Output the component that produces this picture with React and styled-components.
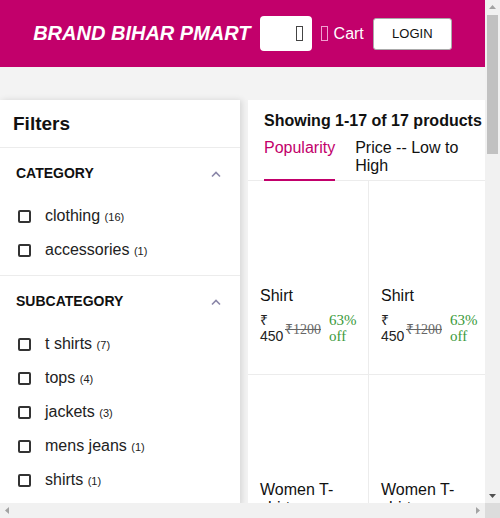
import React from "react";
import styled, { createGlobalStyle } from "styled-components";

const GlobalStyle = createGlobalStyle`
  body {
    margin: 0;
    background: #f3f3f3;
    font-family: "Liberation Sans", Arial, sans-serif;
  }
`;

const categories = [
  { name: "clothing", count: 16 },
  { name: "accessories", count: 1 },
];

const subcategories = [
  { name: "t shirts", count: 7 },
  { name: "tops", count: 4 },
  { name: "jackets", count: 3 },
  { name: "mens jeans", count: 1 },
  { name: "shirts", count: 1 },
];

const products = [
  "Shirt", "Shirt", "Women T-shirt", "Women T-shirt", "Tops", "Tops",
  "Jacket", "Jacket", "Jacket", "Mens Jeans", "T shirt", "T shirt",
  "Tops", "Tops", "T shirt", "T shirt", "Cap",
];

function FilterSection({ title, items }) {
  return (
    <Section>
      <SectionHead>
        <SectionTitle>{title}</SectionTitle>
        <svg width="12" height="8" viewBox="0 0 12 8">
          <path d="M2 6.5 L6 2.5 L10 6.5" fill="none" stroke="#8a86a8" strokeWidth="1.6" />
        </svg>
      </SectionHead>
      {items.map((it) => (
        <Option key={it.name}>
          <Box />
          <OptionLabel>
            {it.name} <Count>({it.count})</Count>
          </OptionLabel>
        </Option>
      ))}
    </Section>
  );
}

function Arrow({ dir, color }) {
  const d = {
    up: "M0 4 L3.5 0 L7 4 Z",
    down: "M0 0 L7 0 L3.5 4 Z",
    left: "M4 0 L4 7 L0 3.5 Z",
    right: "M0 0 L4 3.5 L0 7 Z",
  }[dir];
  const vertical = dir === "up" || dir === "down";
  return (
    <svg width={vertical ? 7 : 4} height={vertical ? 4 : 7} viewBox={vertical ? "0 0 7 4" : "0 0 4 7"}>
      <path d={d} fill={color} />
    </svg>
  );
}

export default function App() {
  return (
    <>
      <GlobalStyle />
      <Frame>
        <Viewport>
          <Header>
            <Brand>BRAND BIHAR PMART</Brand>
            <Search>
              <Glyph color="#444" />
            </Search>
            <Cart>
              <Glyph color="#f0a0d0" />
              Cart
            </Cart>
            <LoginButton>LOGIN</LoginButton>
          </Header>
          <Band />
          <Main>
            <Sidebar>
              <SidebarTitle>Filters</SidebarTitle>
              <FilterSection title="CATEGORY" items={categories} />
              <FilterSection title="SUBCATEGORY" items={subcategories} />
            </Sidebar>
            <Results>
              <Showing>Showing 1-17 of 17 products</Showing>
              <Tabs>
                <Tab active>Popularity</Tab>
                <Tab>Price -- Low to High</Tab>
              </Tabs>
              <Grid>
                {products.map((p, i) => (
                  <Card key={i}>
                    <Thumb />
                    <CardTitle>{p}</CardTitle>
                    <PriceRow>
                      <Price>₹ 450</Price>
                      <Mrp>₹1200</Mrp>
                      <Off>63% off</Off>
                    </PriceRow>
                  </Card>
                ))}
              </Grid>
            </Results>
          </Main>
        </Viewport>
        <VBar>
          <Arrow dir="up" color="#a3a3a3" />
          <VTrack>
            <VThumb />
          </VTrack>
          <Arrow dir="down" color="#505050" />
        </VBar>
        <HBar>
          <Arrow dir="left" color="#a3a3a3" />
          <Arrow dir="right" color="#a3a3a3" />
        </HBar>
        <Corner />
      </Frame>
    </>
  );
}

const Frame = styled.div`
  width: 500px;
  height: 518px;
  display: grid;
  grid-template-columns: 485px 15px;
  grid-template-rows: 503px 15px;
  background: #f3f3f3;
`;

const Viewport = styled.div`
  overflow: hidden;
`;

const VBar = styled.div`
  background: #f1f1f1;
  display: flex;
  flex-direction: column;
  align-items: center;
  padding: 5px 0 5px;
  gap: 6px;
`;

const VTrack = styled.div`
  flex: 1;
  width: 100%;
  padding: 0 2px;
  box-sizing: border-box;
`;

const VThumb = styled.div`
  height: 139px;
  background: #c1c1c1;
`;

const HBar = styled.div`
  background: #f1f1f1;
  display: flex;
  align-items: center;
  justify-content: space-between;
  padding: 0 5px;
`;

const Corner = styled.div`
  background: #dcdcdc;
`;

const Header = styled.header`
  height: 67px;
  background: #c2006b;
  display: flex;
  align-items: center;
  justify-content: center;
  gap: 9px;
`;

const Brand = styled.div`
  color: #fff;
  font-size: 20px;
  font-weight: bold;
  font-style: italic;
`;

const Search = styled.div`
  width: 52px;
  height: 35px;
  box-sizing: border-box;
  background: #fff;
  border-radius: 4px;
  display: flex;
  align-items: center;
  justify-content: flex-end;
  padding-right: 9px;
`;

const Glyph = styled.span`
  display: inline-block;
  width: 5px;
  height: 13px;
  border: 1px solid ${(p) => p.color};
`;

const Cart = styled.div`
  display: flex;
  align-items: center;
  gap: 6px;
  color: #fff;
  font-size: 16px;
`;

const LoginButton = styled.button`
  width: 79px;
  height: 32px;
  background: #fff;
  border: 1px solid #aaa;
  border-radius: 3px;
  font-family: "Liberation Sans", Arial, sans-serif;
  font-size: 13px;
  color: #111;
`;

const Band = styled.div`
  height: 33px;
`;

const Main = styled.div`
  display: flex;
  gap: 8px;
  align-items: flex-start;
`;

const Sidebar = styled.aside`
  width: 240px;
  flex-shrink: 0;
  background: #fff;
  box-shadow: 2px 0 6px rgba(0, 0, 0, 0.12);
`;

const SidebarTitle = styled.div`
  height: 47px;
  padding-left: 13px;
  display: flex;
  align-items: center;
  font-size: 19px;
  font-weight: bold;
  color: #111;
  border-bottom: 1px solid #ececec;
`;

const Section = styled.div`
  padding: 0 18px 8px 16px;
  border-bottom: 1px solid #ececec;
`;

const SectionHead = styled.div`
  height: 51px;
  display: flex;
  align-items: center;
  justify-content: space-between;
`;

const SectionTitle = styled.div`
  font-size: 14px;
  font-weight: bold;
  color: #111;
  margin-bottom: 2px;
`;

const Option = styled.div`
  height: 34px;
  display: flex;
  align-items: center;
  gap: 14px;
  padding-left: 2px;
`;

const Box = styled.span`
  width: 13px;
  height: 13px;
  box-sizing: border-box;
  border: 2px solid #333;
  border-radius: 2px;
`;

const OptionLabel = styled.span`
  font-size: 16px;
  color: #222;
`;

const Count = styled.span`
  font-size: 11px;
`;

const Results = styled.section`
  flex: 1;
  min-width: 0;
  background: #fff;
  overflow: hidden;
`;

const Showing = styled.div`
  padding: 12px 16px 0;
  font-size: 16px;
  font-weight: bold;
  color: #111;
  white-space: nowrap;
`;

const Tabs = styled.div`
  display: flex;
  gap: 20px;
  padding: 9px 16px 0;
  border-bottom: 1px solid #ececec;
`;

const Tab = styled.div`
  font-size: 16px;
  line-height: 18px;
  padding: 0 0 4px;
  color: ${(p) => (p.active ? "#c2006b" : "#111")};
  border-bottom: 2px solid ${(p) => (p.active ? "#c2006b" : "transparent")};
  margin-bottom: -1px;
`;

const Grid = styled.div`
  display: grid;
  grid-template-columns: 121px 121px;
`;

const Card = styled.div`
  height: 194px;
  box-sizing: border-box;
  padding: 12px 12px 0;
  border-right: 1px solid #ececec;
  border-bottom: 1px solid #ececec;
`;

const Thumb = styled.div`
  height: 94px;
`;

const CardTitle = styled.div`
  font-size: 16px;
  line-height: 18px;
  color: #111;
  height: 18px;
`;

const PriceRow = styled.div`
  display: flex;
  align-items: center;
  margin-top: 7px;
`;

const Price = styled.span`
  font-size: 14px;
  line-height: 16px;
  color: #222;
  width: 22px;
  margin-right: 3px;
`;

const Mrp = styled.span`
  font-family: "Liberation Serif", serif;
  font-size: 14px;
  color: #666;
  text-decoration: line-through;
  margin-right: 8px;
`;

const Off = styled.span`
  font-family: "Liberation Serif", serif;
  font-size: 15px;
  line-height: 16px;
  color: #3a9a3a;
  width: 28px;
`;
